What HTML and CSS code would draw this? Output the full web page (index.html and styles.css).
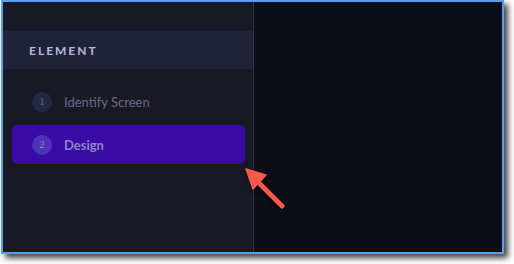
FILE: index.html
```html
<!DOCTYPE html>
<html>
<head>
<meta charset="utf-8">
<link rel="stylesheet" href="styles.css">
</head>
<body>
<div class="frame">
  <aside class="sidebar">
    <div class="section-header">ELEMENT</div>
    <ul class="steps">
      <li class="step">
        <span class="num">1</span>
        <span class="label">Identify Screen</span>
      </li>
      <li class="step active">
        <span class="num">2</span>
        <span class="label">Design</span>
      </li>
    </ul>
  </aside>
  <main class="canvas"></main>
</div>
<svg class="pointer" width="514" height="264" viewBox="0 0 514 264">
  <g fill="#f25a4c" stroke="#f25a4c" stroke-linecap="round" stroke-linejoin="round">
    <line x1="254" y1="178" x2="282" y2="206" stroke-width="5"/>
    <polygon points="246,169 266,175 253,189" stroke-width="1.5"/>
  </g>
</svg>
</body>
</html>
```
FILE: styles.css
```css
html, body {
  margin: 0;
  padding: 0;
  background: #ffffff;
}
body {
  position: relative;
  width: 514px;
  height: 264px;
  overflow: hidden;
  font-family: Lato, "Open Sans", sans-serif;
}
.frame {
  margin-left: 1px;
  width: 503px;
  height: 254px;
  box-sizing: border-box;
  border: 2px solid #5b9cf4;
  box-shadow: 4px 4px 6px rgba(0, 0, 0, 0.75);
  display: flex;
  background: #0e0e17;
}
.sidebar {
  width: 250px;
  flex: none;
  background: #191926;
  border-right: 1px solid #33344a;
  padding-top: 29px;
  box-sizing: content-box;
}
.section-header {
  height: 38px;
  background: #20223a;
  display: flex;
  align-items: center;
  padding-left: 26px;
  font-size: 12px;
  font-weight: 700;
  letter-spacing: 2px;
  color: #b9b9de;
}
.steps {
  list-style: none;
  margin: 0;
  padding: 13px 8px 0 9px;
  display: flex;
  flex-direction: column;
  gap: 4px;
}
.step {
  height: 39px;
  border-radius: 5px;
  display: flex;
  align-items: center;
  padding-left: 20px;
  gap: 12px;
}
.num {
  width: 20px;
  height: 20px;
  border-radius: 50%;
  background: #262841;
  color: #6c6c8c;
  font-family: "Liberation Serif", serif;
  font-size: 10px;
  display: flex;
  align-items: center;
  justify-content: center;
}
.label {
  font-size: 13px;
  color: #6a6a86;
}
.step.active {
  background: #3a0aa6;
}
.step.active .num {
  background: #4d33b5;
  color: #8f88cc;
}
.step.active .label {
  font-weight: 700;
  color: #8d86c4;
}
.canvas {
  flex: 1;
  background: #0e0e17;
}
.pointer {
  position: absolute;
  left: 0;
  top: 0;
  filter: drop-shadow(1px 2px 2px rgba(0, 0, 0, 0.7));
}
```
